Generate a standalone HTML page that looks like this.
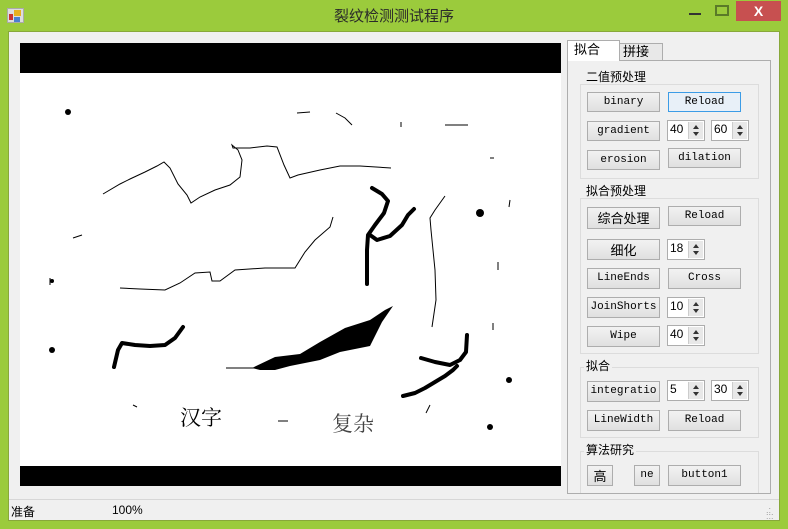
<!DOCTYPE html>
<html><head><meta charset="utf-8"><style>
*{box-sizing:border-box;margin:0;padding:0}
body{width:788px;height:529px;background:#9bcb3c;position:relative;overflow:hidden;font-family:"Liberation Sans","Noto Sans CJK SC",sans-serif;font-size:12px;color:#000}
.a{position:absolute}
.client{left:8px;top:31px;width:772px;height:490px;background:#f0f0f0;border:1px solid #88a83a}
.btn{position:absolute;background:linear-gradient(#f2f2f2,#e0e0e0);border:1px solid #adadad;font-family:"Liberation Mono","Noto Sans CJK SC",monospace;font-size:11px;display:flex;align-items:center;justify-content:center;color:#000;padding-bottom:1px}
.cjk{font-family:"Liberation Sans","Noto Sans CJK SC",sans-serif;font-size:13px}
.spin{position:absolute;width:38px;height:21px;background:#fff;border:1px solid #adadad;font-size:12px;padding-left:2px;line-height:17px}
.spin i{position:absolute;right:1px;top:1px;width:15px;height:17px;background:#e8e8e8;border-left:1px solid #ccc}
.spin i:before{content:"";position:absolute;left:4px;top:3px;border:3px solid transparent;border-bottom:4px solid #333;border-top:0}
.spin i:after{content:"";position:absolute;left:4px;top:10px;border:3px solid transparent;border-top:4px solid #333;border-bottom:0}
.grp{position:absolute;border:1px solid #dcdcdc}
.gl{position:absolute;background:#f0f0f0;font-size:12px;padding:0 2px;line-height:14px}
</style></head><body>
<div class="a" style="left:7px;top:8px;width:17px;height:15px;border:1px solid #aaa;background:#ddd">
 <div class="a" style="left:1px;top:5px;width:4px;height:6px;background:#c33"></div>
 <div class="a" style="left:6px;top:1px;width:7px;height:6px;background:#e8b020"></div>
 <div class="a" style="left:6px;top:8px;width:6px;height:5px;background:#4a80d0"></div>
</div>
<div class="a" style="left:0;top:5px;width:788px;text-align:center;font-size:15px;color:#2a2a2a">裂纹检测测试程序</div>
<div class="a" style="left:689px;top:13px;width:12px;height:2px;background:#333"></div>
<div class="a" style="left:715px;top:5px;width:14px;height:11px;border:2px solid #5a7a28"></div>
<div class="a" style="left:736px;top:1px;width:45px;height:20px;background:#c75050;color:#fff;text-align:center;font-size:14px;line-height:20px;font-weight:bold">X</div>
<div class="a client"></div>
<div class="a" style="left:20px;top:43px;width:541px;height:443px;background:#fff"></div>
<div class="a" style="left:20px;top:43px;width:541px;height:30px;background:#000"></div>
<div class="a" style="left:20px;top:466px;width:541px;height:20px;background:#000"></div>
<svg class="a" style="left:20px;top:70px" width="540" height="400" viewBox="0 0 540 400" fill="none" stroke="#000">
<g stroke-width="1">
<polyline points="83,124 100,114 110,109 125,102 137,96 144,92 150,98 158,114 167,125 171,133 180,127 195,120 210,115 220,107 222,90 218,80 212,75 213,78 230,78 247,76 257,77 264,95 270,108 278,105 300,100 320,96 340,96 371,98"/>
<polyline points="100,218 120,219 145,220 160,213 175,203 190,202 192,211 200,211 215,200 245,198 275,198 285,182 295,170 310,157 313,147"/>
<polyline points="425,126 415,140 410,148 411,160 413,180 415,200 416,230 412,257"/>
<polyline points="277,43 290,42"/><polyline points="316,43 325,48 332,55"/><polyline points="381,52 381,57"/><polyline points="425,55 448,55"/>
<polyline points="53,168 62,165"/><polyline points="206,298 240,298"/><polyline points="258,351 268,351"/>
<polyline points="470,88 474,88"/><polyline points="490,130 489,137"/><polyline points="478,192 478,200"/><polyline points="473,253 473,260"/>
<polyline points="30,208 30,215"/><polyline points="410,335 406,343"/><polyline points="113,335 117,337"/>
</g>
<g stroke-width="4" stroke-linecap="round" stroke-linejoin="round">
<polyline points="352,118 362,124 368,131 364,143 355,155 348,165 347,180 347,214"/>
<polyline points="350,165 357,170 370,166 382,155 388,145 394,139"/>
<polyline points="94,297 98,280 102,273 115,275 130,276 145,275 155,268 163,257"/>
<polyline points="401,288 415,292 430,295 440,290 446,282 447,265"/>
<polyline points="383,326 395,323 405,318 415,312 425,306 433,300 437,296"/>
</g>
<polygon fill="#000" stroke="none" points="232,298 255,287 280,284 300,272 325,258 350,250 365,240 373,236 362,252 350,276 340,278 320,282 300,290 270,296 255,300 240,300"/>
<circle cx="460" cy="143" r="4" fill="#000" stroke="none"/>
<circle cx="489" cy="310" r="3" fill="#000" stroke="none"/>
<circle cx="470" cy="357" r="3" fill="#000" stroke="none"/>
<circle cx="48" cy="42" r="3" fill="#000" stroke="none"/>
<circle cx="32" cy="280" r="3" fill="#000" stroke="none"/>
<circle cx="32" cy="211" r="2" fill="#000" stroke="none"/>
</svg>
<div class="a" style="left:180px;top:402px;font-size:21px;font-family:'Noto Serif CJK SC',serif">汉字</div>
<div class="a" style="left:332px;top:408px;font-size:21px;color:#444;font-family:'Noto Serif CJK SC',serif">复杂</div>
<div class="a" style="left:619px;top:43px;width:44px;height:18px;border:1px solid #adadad;background:#e8e8e8;font-size:13px;padding-left:3px;line-height:16px">拼接</div>
<div class="a" style="left:567px;top:60px;width:204px;height:434px;border:1px solid #adadad;background:#fff"></div>
<div class="a" style="left:567px;top:40px;width:53px;height:21px;border:1px solid #adadad;border-bottom:none;background:#fff;font-size:13px;padding-left:6px;line-height:18px">拟合</div>
<div class="a" style="left:568px;top:61px;width:202px;height:432px;background:#f0f0f0"></div>
<div class="grp" style="left:580px;top:84px;width:179px;height:95px"></div><div class="gl" style="left:584px;top:70px">二值预处理</div>
<div class="grp" style="left:580px;top:198px;width:179px;height:156px"></div><div class="gl" style="left:584px;top:184px">拟合预处理</div>
<div class="grp" style="left:580px;top:367px;width:179px;height:71px"></div><div class="gl" style="left:584px;top:359px">拟合</div>
<div class="grp" style="left:580px;top:451px;width:179px;height:42px;border-bottom:none"></div><div class="gl" style="left:584px;top:443px">算法研究</div>
<div class="btn" style="left:587px;top:92px;width:73px;height:20px">binary</div>
<div class="btn" style="left:668px;top:92px;width:73px;height:20px;border-color:#3c9ce6;background:#e8f0f8">Reload</div>
<div class="btn" style="left:587px;top:121px;width:73px;height:20px">gradient</div>
<div class="spin" style="left:667px;top:120px">40<i></i></div>
<div class="spin" style="left:711px;top:120px">60<i></i></div>
<div class="btn" style="left:587px;top:150px;width:73px;height:20px">erosion</div>
<div class="btn" style="left:668px;top:148px;width:73px;height:20px">dilation</div>
<div class="btn cjk" style="left:587px;top:207px;width:73px;height:22px">综合处理</div>
<div class="btn" style="left:668px;top:206px;width:73px;height:20px">Reload</div>
<div class="btn cjk" style="left:587px;top:239px;width:73px;height:21px">细化</div>
<div class="spin" style="left:667px;top:239px">18<i></i></div>
<div class="btn" style="left:587px;top:268px;width:73px;height:21px">LineEnds</div>
<div class="btn" style="left:668px;top:268px;width:73px;height:21px">Cross</div>
<div class="btn" style="left:587px;top:297px;width:73px;height:21px">JoinShorts</div>
<div class="spin" style="left:667px;top:297px">10<i></i></div>
<div class="btn" style="left:587px;top:326px;width:73px;height:21px">Wipe</div>
<div class="spin" style="left:667px;top:325px">40<i></i></div>
<div class="btn" style="left:587px;top:381px;width:73px;height:21px">integratio</div>
<div class="spin" style="left:667px;top:380px">5<i></i></div>
<div class="spin" style="left:711px;top:380px">30<i></i></div>
<div class="btn" style="left:587px;top:410px;width:73px;height:21px">LineWidth</div>
<div class="btn" style="left:668px;top:410px;width:73px;height:21px">Reload</div>
<div class="btn cjk" style="left:587px;top:465px;width:26px;height:21px">高</div>
<div class="btn" style="left:634px;top:465px;width:26px;height:21px">ne</div>
<div class="btn" style="left:668px;top:465px;width:73px;height:21px">button1</div>
<div class="a" style="left:9px;top:499px;width:770px;height:1px;background:#d7d7d7"></div>
<div class="a" style="left:11px;top:503px;font-size:12px">准备</div>
<div class="a" style="left:112px;top:503px;font-size:12px">100%</div>
<div class="a" style="left:766px;top:507px;font-size:9px;color:#999;line-height:6px">.:<br>:::</div>
</body></html>
